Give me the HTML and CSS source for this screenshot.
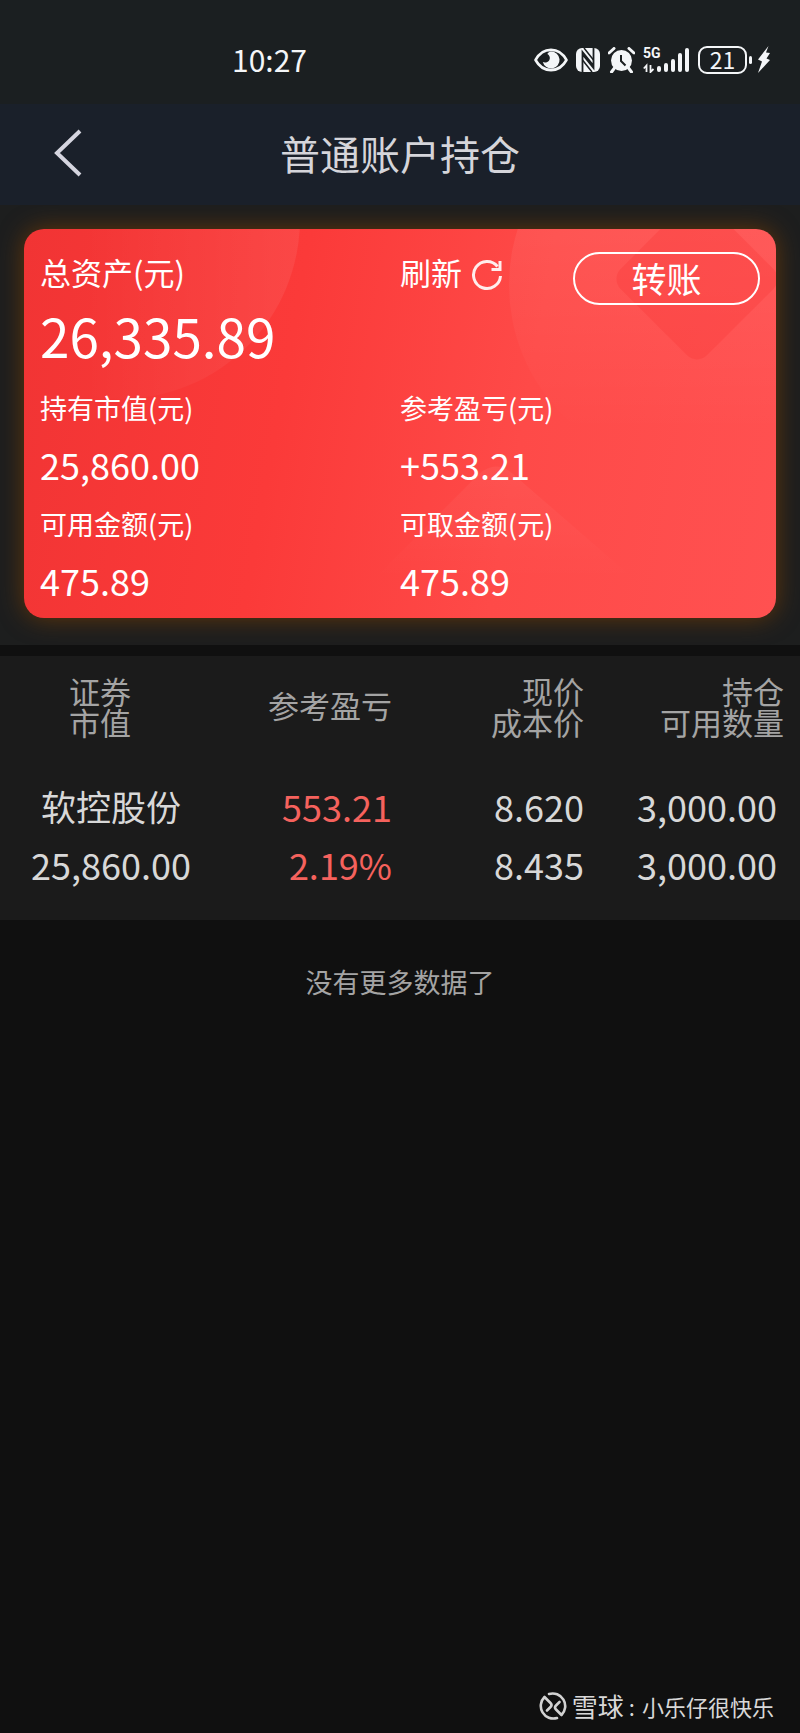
FILE: index.html
```html
<!DOCTYPE html>
<html lang="zh-CN">
<head>
    <meta charset="UTF-8">
    <meta name="viewport" content="width=device-width, initial-scale=1">
    <title>普通账户持仓</title>
    <link rel="stylesheet" href="styles.css">
</head>
<body>

<!-- 状态栏 -->
<div class="status-bar">
    <span class="time">10:27</span>
    <div class="status-icons">
        <svg width="34" height="24" viewBox="0 0 34 24">
            <path d="M1.500 12C9 -1.500 25 -1.500 32.500 12C25 25.500 9 25.500 1.500 12Z" fill="none" stroke="#f4f6f8" stroke-width="2.600" stroke-linejoin="round"/>
            <path d="M17 3.500a8.500 8.500 0 1 1-8.200 10.500c3 1.500 7.500-.5 7-4.500c-.3-2-1.300-3-2.500-3.500c1-1.500 2-2.500 3.700-2.500z" fill="#f4f6f8"/>
        </svg>
        <svg width="24" height="24" viewBox="0 0 24 24">
            <rect width="24" height="24" rx="6" fill="#f4f6f8"/>
            <path d="M6.500 24V4L17 17M17.500 0V20L7 7" fill="none" stroke="#1b1f21" stroke-width="1.800"/>
            <path d="M8 0L17.500 12M6.500 12L16 24" fill="none" stroke="#1b1f21" stroke-width="1.500"/>
        </svg>
        <svg width="27" height="26" viewBox="0 0 27 26">
            <circle cx="13.500" cy="13.500" r="10.500" fill="#f4f6f8"/>
            <path d="M1 6L6 1.500M26 6L21 1.500M6.500 21L3.500 25M20.500 21L23.500 25" stroke="#f4f6f8" stroke-width="3" stroke-linecap="round"/>
            <path d="M13 8V14L17.500 18.500" fill="none" stroke="#1b1f21" stroke-width="2"/>
        </svg>
        <div class="network">
            <span class="network-type">5G</span>
            <svg width="47" height="26" viewBox="0 0 47 26">
                <path d="M3.500 25V18.500L.8 21.500M7.500 18V25L10.500 22" fill="none" stroke="#f4f6f8" stroke-width="1.800"/>
                <path d="M16 21V23M23 18V23M30 14V23M37 8V23M44 3V23" stroke="#f4f6f8" stroke-width="4" stroke-linecap="round"/>
            </svg>
        </div>
        <div class="battery"><span class="battery-level">21</span></div>
        <svg width="14" height="28" viewBox="0 0 14 28">
            <path d="M11.500 0L1 13.500L5 15.500L1 27L13 14L9.500 12.500L13 7L9 6.500Z" fill="#f4f6f8"/>
        </svg>
    </div>
</div>

<!-- 标题栏 -->
<header class="header">
    <button class="back-btn" aria-label="返回">
        <svg width="28" height="48" viewBox="0 0 28 48">
            <path d="M26 2L3 24L26 46" fill="none" stroke="#d5d5df" stroke-width="4"/>
        </svg>
    </button>
    <h1 class="title">普通账户持仓</h1>
</header>

<!-- 资产卡片 -->
<section class="summary">
    <div class="card">
        <svg class="card-bg" viewBox="0 0 752 389" preserveAspectRatio="none">
            <defs>
                <linearGradient id="fadeLeft" x1="0" y1="0" x2="1" y2="0">
                    <stop offset="0.400" stop-color="#fff" stop-opacity="0"/>
                    <stop offset="1" stop-color="#fff" stop-opacity="0.070"/>
                </linearGradient>
                <linearGradient id="fadeDown" x1="0" y1="0" x2="0" y2="1">
                    <stop offset="0.200" stop-color="#fff" stop-opacity="0.080"/>
                    <stop offset="0.900" stop-color="#fff" stop-opacity="0"/>
                </linearGradient>
                <linearGradient id="fadeHill" x1="0" y1="0" x2="0" y2="1">
                    <stop offset="0" stop-color="#fff" stop-opacity="0.050"/>
                    <stop offset="1" stop-color="#fff" stop-opacity="0"/>
                </linearGradient>
            </defs>
            <circle cx="96" cy="-10" r="180" fill="url(#fadeLeft)"/>
            <circle cx="669" cy="56" r="184" fill="url(#fadeDown)"/>
            <rect x="612" y="-11" width="122" height="122" rx="14" transform="rotate(45 673 50)" fill="#f83a3a" fill-opacity="0.350"/>
            <path d="M350 350L455 245Q472 230 489 245L610 350Z" fill="url(#fadeHill)"/>
        </svg>

        <div class="card-top">
            <div class="card-cell label-main">总资产(元)</div>
            <button class="refresh-btn">刷新
                <svg class="refresh-icon" width="32" height="32" viewBox="0 0 32 32">
                    <path d="M29.500 17A13.500 13.500 0 1 1 26.500 7.500" fill="none" stroke="#fff" stroke-opacity="0.900" stroke-width="3"/>
                    <path d="M29 2V10.500H20.500" fill="none" stroke="#fff" stroke-opacity="0.900" stroke-width="3"/>
                </svg>
            </button>
            <button class="transfer-btn">转账</button>
        </div>
        <div class="total">26,335.89</div>
        <dl class="card-grid">
            <div class="card-cell"><dt>持有市值(元)</dt><dd>25,860.00</dd></div>
            <div class="card-cell"><dt>参考盈亏(元)</dt><dd>+553.21</dd></div>
            <div class="card-cell"><dt>可用金额(元)</dt><dd>475.89</dd></div>
            <div class="card-cell"><dt>可取金额(元)</dt><dd>475.89</dd></div>
        </dl>
    </div>
</section>

<!-- 持仓列表 -->
<table class="holdings">
    <thead>
        <tr>
            <th class="col-name">证券<br>市值</th>
            <th class="col-profit">参考盈亏</th>
            <th class="col-price">现价<br>成本价</th>
            <th class="col-amount">持仓<br>可用数量</th>
        </tr>
    </thead>
    <tbody>
        <tr>
            <td class="col-name"><span class="stock-name">软控股份</span><br>25,860.00</td>
            <td class="col-profit up">553.21<br>2.19%</td>
            <td class="col-price">8.620<br>8.435</td>
            <td class="col-amount">3,000.00<br>3,000.00</td>
        </tr>
    </tbody>
</table>

<p class="no-more">没有更多数据了</p>

<footer class="watermark">
    <svg width="28" height="28" viewBox="0 0 28 28">
        <g fill="none" stroke="#d2d2d2" stroke-width="2.600" stroke-linecap="round" stroke-linejoin="round">
            <path d="M10 2A12.600 12.600 0 0 1 22.500 23L17 17.500Q15 15.500 17 13.500L20.500 10"/>
            <path d="M18 26A12.600 12.600 0 0 1 5.500 5L11.500 11Q13.500 13 11.500 15L8 18.500"/>
        </g>
    </svg>
    <span class="brand">雪球</span>
    <span class="colon">:</span>
    <span>小乐仔很快乐</span>
</footer>

</body>
</html>
```

FILE: styles.css
```css
* {
    box-sizing: border-box;
}

body {
    font-family: "Noto Sans CJK SC", sans-serif;
    background-color: #101010;
    color: #d8d8d8;
    margin: 0;
    min-height: 100vh;
    display: flex;
    flex-direction: column;
}

button {
    font-family: inherit;
    color: inherit;
    background: none;
    border: none;
    padding: 0;
    cursor: pointer;
}

svg {
    display: block;
    flex-shrink: 0;
}

/* 状态栏 */
.status-bar {
    display: flex;
    justify-content: space-between;
    align-items: center;
    height: 104px;
    padding: 16px 29px 0 232px;
    background-color: #1b1f21;
    color: #f4f6f8;
}

.time {
    padding-bottom: 2px;
    font-size: 30px;
    line-height: 40px;
}

.status-icons {
    display: flex;
    align-items: center;
    gap: 8px;
}

.network {
    position: relative;
}

.network-type {
    position: absolute;
    top: -2px;
    left: 0;
    font-family: "Roboto", sans-serif;
    font-size: 14px;
    font-weight: 700;
    line-height: 16px;
}

.battery {
    position: relative;
    width: 49px;
    height: 28px;
    margin-right: 2px;
    border: 2px solid #f4f6f8;
    border-radius: 9px;
    text-align: center;
}

.battery::after {
    content: "";
    position: absolute;
    top: 8px;
    right: -7px;
    width: 3px;
    height: 8px;
    border-radius: 2px;
    background-color: #f4f6f8;
}

.battery-level {
    display: block;
    font-size: 23px;
    line-height: 22px;
}

/* 标题栏 */
.header {
    display: grid;
    grid-template-columns: 1fr auto 1fr;
    align-items: center;
    height: 101px;
    padding: 0 54px 4px;
    background-color: #1a202a;
}

.back-btn {
    justify-self: start;
}

.title {
    margin: 0;
    font-size: 40px;
    font-weight: 400;
    line-height: 56px;
    color: #d5d5da;
}

/* 资产卡片 */
.summary {
    padding: 24px 24px 27px;
    background-color: #1d1e1e;
    border-bottom: 11px solid #101010;
    overflow: hidden;
}

.card {
    position: relative;
    padding: 23px 16px 7px;
    border-radius: 20px;
    background: linear-gradient(100deg, #f13434 0%, #fb3a39 35%, #fe4a48 65%, #ff5151 100%);
    box-shadow: 0 0 24px rgba(130, 65, 0, 0.7);
    color: #fff;
    overflow: hidden;
}

.card-bg {
    position: absolute;
    top: 0;
    left: 0;
    width: 100%;
    height: 100%;
}

.card-top,
.total,
.card-grid {
    position: relative;
}

.card-top {
    display: flex;
    align-items: flex-start;
}

.card-cell {
    width: 50%;
}

.label-main,
.refresh-btn {
    font-size: 31px;
    line-height: 40px;
}

.refresh-btn {
    display: flex;
    align-items: center;
    gap: 9px;
}

.refresh-icon {
    margin-top: 6px;
}

.transfer-btn {
    width: 187px;
    height: 53px;
    margin-left: auto;
    padding-bottom: 2px;
    border: 2px solid #fff;
    border-radius: 27px;
    font-size: 35px;
    line-height: 44px;
}

.total {
    margin-bottom: 14px;
    font-size: 53px;
    line-height: 60px;
}

.card-grid {
    display: flex;
    flex-wrap: wrap;
    margin: 0;
}

.card-grid dt {
    font-size: 27px;
    line-height: 58px;
}

.card-grid dd {
    margin: 0 0 4px;
    font-size: 36px;
    line-height: 54px;
}

/* 持仓列表 */
.holdings {
    width: 100%;
    table-layout: fixed;
    border-collapse: collapse;
    background-color: #1b1b1b;
    text-align: right;
}

.holdings th {
    height: 104px;
    padding: 0 0 4px;
    font-size: 31px;
    font-weight: 400;
    line-height: 31px;
    color: #a4a4a4;
}

.holdings td {
    padding: 16px 0 27px;
    font-size: 36px;
    line-height: 58px;
}

.holdings .col-name {
    width: 25%;
    text-align: center;
}

.holdings .col-profit,
.holdings .col-price {
    width: 24%;
}

.holdings th.col-profit {
    padding-bottom: 8px;
}

.holdings .col-amount {
    padding-right: 16px;
}

.holdings td.col-name {
    padding-left: 22px;
}

.holdings td.col-amount {
    padding-right: 23px;
}

.holdings .up {
    color: #f5625d;
}

.stock-name {
    font-size: 35px;
}

.no-more {
    margin: 42px 0;
    text-align: center;
    font-size: 27px;
    line-height: 40px;
    color: #a4a4a4;
}

/* 水印 */
.watermark {
    display: flex;
    align-items: center;
    justify-content: flex-end;
    gap: 5px;
    margin-top: auto;
    padding: 0 26px 11px 0;
    font-size: 22px;
    line-height: 32px;
}

.brand {
    font-size: 26px;
}

.colon {
    padding-right: 2px;
}
```
